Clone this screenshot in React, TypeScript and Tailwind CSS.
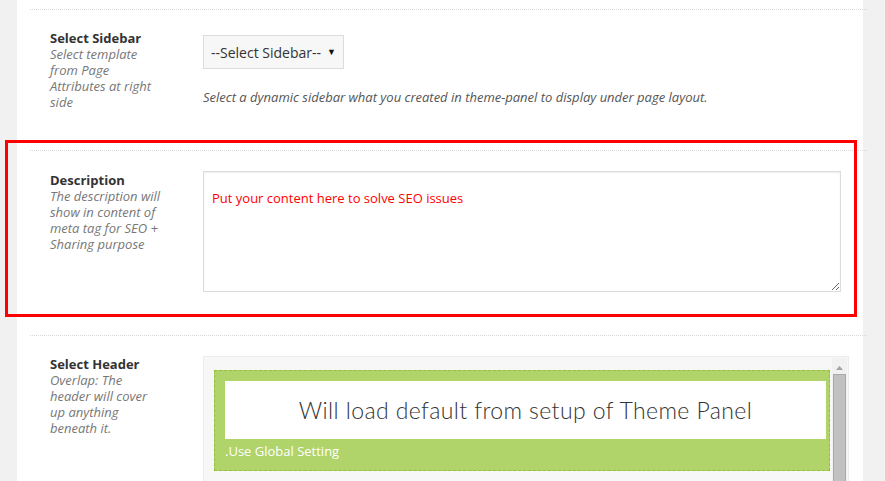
import React from 'react';

const Separator: React.FC = () => (
    <div className="ml-[13px] mr-[-4px] border-t border-dotted border-[#d9d9d9]" />
);

const Label: React.FC<{ title: string; lines: string[] }> = ({ title, lines }) => (
    <div className="w-[186px] shrink-0 pl-[33px]">
        <div className="text-[13px] leading-[16px] font-bold text-[#333]">{title}</div>
        <div className="text-[13px] leading-[16px] italic text-[#777]">
            {lines.map((l, i) => (
                <div key={i}>{l}</div>
            ))}
        </div>
    </div>
);

const App: React.FC = () => {
    return (
        <div
            className="relative flex h-[481px] w-[885px] overflow-hidden bg-[#f1f1f1]"
            style={{ fontFamily: '"Open Sans", "Liberation Sans", sans-serif' }}
        >
            {/* left strip */}
            <div className="w-[17px] shrink-0" />

            {/* main panel */}
            <div className="w-[846px] shrink-0 bg-white pt-[9px]">
                {/* Select Sidebar */}
                <Separator />
                <div className="flex pt-[20px] pb-[40px]">
                    <Label title="Select Sidebar" lines={['Select template', 'from Page', 'Attributes at right', 'side']} />
                    <div className="flex flex-col pt-[5px]">
                        <div className="flex h-[34px] w-[141px] items-center justify-between border border-[#dcdcdc] bg-[#f7f7f7] pl-[7px] pr-[7px]">
                            <span className="text-[14px] text-[#333]">--Select Sidebar--</span>
                            <span className="text-[9px] text-[#111]">▼</span>
                        </div>
                        <p className="mt-[20px] text-[13px] leading-[16px] italic text-[#555]">
                            Select a dynamic sidebar what you created in theme-panel to display under page layout.
                        </p>
                    </div>
                </div>

                {/* Description */}
                <Separator />
                <div className="flex pt-[20px] pb-[43px]">
                    <div className="pt-[1px]">
                        <Label
                            title="Description"
                            lines={['The description will', 'show in content of', 'meta tag for SEO +', 'Sharing purpose']}
                        />
                    </div>
                    <textarea
                        readOnly
                        defaultValue="Put your content here to solve SEO issues"
                        className="h-[121px] w-[638px] resize-y border border-[#dcdcdc] bg-white px-[8px] pt-[17px] text-[13px] leading-[18px] text-[#ff0000] shadow-[inset_0_1px_2px_rgba(0,0,0,0.07)] outline-none"
                    />
                </div>

                {/* Select Header */}
                <Separator />
                <div className="flex pt-[20px]">
                    <Label title="Select Header" lines={['Overlap: The', 'header will cover', 'up anything', 'beneath it.']} />
                    <div className="flex h-[160px] w-[646px] border border-[#ececec] bg-[#f7f7f7] pl-[10px] pt-[13px]">
                        <div className="flex h-[101px] w-[616px] shrink-0 flex-col border border-dashed border-[#94bf3f] bg-[#b0d36a] pl-[10px] pr-[3px] pt-[10px]">
                            <div
                                className="flex h-[58px] items-center justify-center bg-white text-[23px] font-light tracking-[0.4px] text-[#333]"
                                style={{ fontFamily: 'Lato, "Open Sans", sans-serif' }}
                            >
                                Will load default from setup of Theme Panel
                            </div>
                            <div className="mt-[3px] text-[13px] leading-[18px] text-white">.Use Global Setting</div>
                        </div>
                        {/* scrollbar */}
                        <div className="ml-[2px] mt-[-12px] flex w-[15px] flex-col items-center bg-[#f1f1f1]">
                            <svg width="9" height="6" viewBox="0 0 9 6" className="mt-[7px]">
                                <polygon points="4.5,1 8,5 1,5" fill="#a3a3a3" />
                            </svg>
                            <div className="mt-[3px] h-[140px] w-[13px] border border-[#a9a9a9] bg-[#c1c1c1]" />
                        </div>
                    </div>
                </div>
            </div>

            {/* right strip */}
            <div className="flex-1" />

            {/* highlight annotation */}
            <div className="pointer-events-none absolute left-[5px] top-[140px] h-[177px] w-[852px] border-[3px] border-[#ff0000]" />
        </div>
    );
};

export default App;
